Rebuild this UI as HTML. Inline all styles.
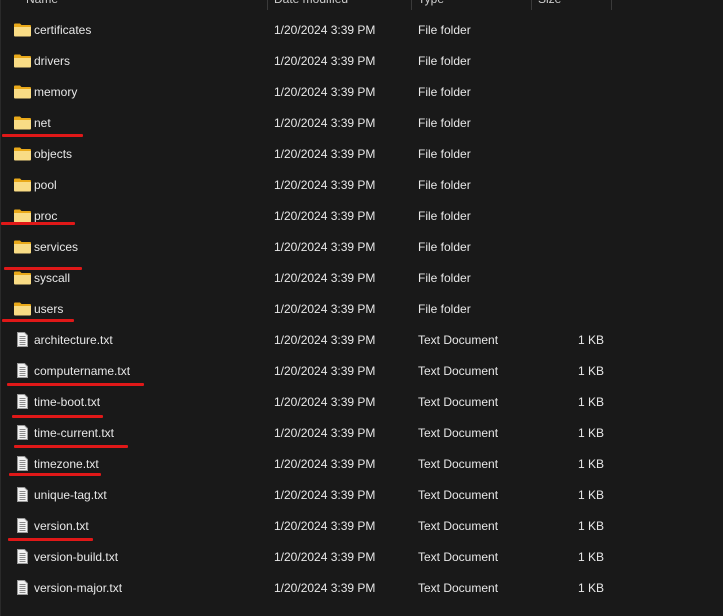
<!DOCTYPE html><html><head><style>
body{margin:0;width:723px;height:616px;background:#191919;overflow:hidden;font-family:"Liberation Sans",sans-serif;font-size:12px;color:#e8e8e8;position:relative}
.r{position:absolute;left:0;width:723px;height:20px}
.r span{position:absolute;top:3px;white-space:nowrap}
.n{left:34px}.d{left:274px}.t{left:418px}.s{left:578px}
.ic{position:absolute;left:14px;top:3px}
.u{position:absolute;height:3px;background:#e01818;border-radius:1px}
.sep{position:absolute;top:0;width:1px;height:10px;background:#3a3a3a}
</style></head><body>
<div style="position:absolute;left:0;top:0;width:1px;height:616px;background:#2a2a2a"></div>
<div class="sep" style="left:267px"></div><div class="sep" style="left:411px"></div><div class="sep" style="left:531px"></div><div class="sep" style="left:611px"></div>
<div style="position:absolute;top:-8px;left:26px;color:#ccc">Name</div>
<div style="position:absolute;top:-8px;left:274px;color:#ccc">Date modified</div>
<div style="position:absolute;top:-8px;left:418px;color:#ccc">Type</div>
<div style="position:absolute;top:-8px;left:538px;color:#ccc">Size</div>
<div id="rows"></div>
<script>
var f=["certificates","drivers","memory","net","objects","pool","proc","services","syscall","users"];
var t=["architecture.txt","computername.txt","time-boot.txt","time-current.txt","timezone.txt","unique-tag.txt","version.txt","version-build.txt","version-major.txt"];
var fold='<svg class="ic" width="17" height="14" viewBox="0 0 17 14"><path d="M0 1.5Q0 0.5 1 0.5H6L7.5 2H16Q17 2 17 3V4H0Z" fill="#e9a91a"/><path d="M0 4H17V12.5Q17 13.5 16 13.5H1Q0 13.5 0 12.5Z" fill="#f9dc85"/></svg>';
var file='<svg class="ic" style="left:17px;top:2px" width="11" height="15" viewBox="0 0 11 15"><path d="M0.5 0.5H7.5L10.5 3.5V14.5H0.5Z" fill="#f2f2f2" stroke="#9a9a9a"/><path d="M2.5 4.5H8.5M2.5 6.5H8.5M2.5 8.5H8.5M2.5 10.5H8.5M2.5 12.5H8.5" stroke="#8a8a8a"/></svg>';
var h='';
f.forEach(function(n,i){h+='<div class="r" style="top:'+(20+31*i)+'px">'+fold+'<span class="n">'+n+'</span><span class="d">1/20/2024 3:39 PM</span><span class="t">File folder</span></div>';});
t.forEach(function(n,i){h+='<div class="r" style="top:'+(330+31*i)+'px">'+file+'<span class="n">'+n+'</span><span class="d">1/20/2024 3:39 PM</span><span class="t">Text Document</span><span class="s">1 KB</span></div>';});
[[2,83,134],[1,75,222],[4,82,267],[2,74,319],[7,144,383],[12,103,415],[14,128,445],[9,101,473],[8,93,538]].forEach(function(u){h+='<div class="u" style="left:'+u[0]+'px;width:'+(u[1]-u[0])+'px;top:'+u[2]+'px"></div>';});
document.getElementById('rows').innerHTML=h;
</script>
</body></html>
